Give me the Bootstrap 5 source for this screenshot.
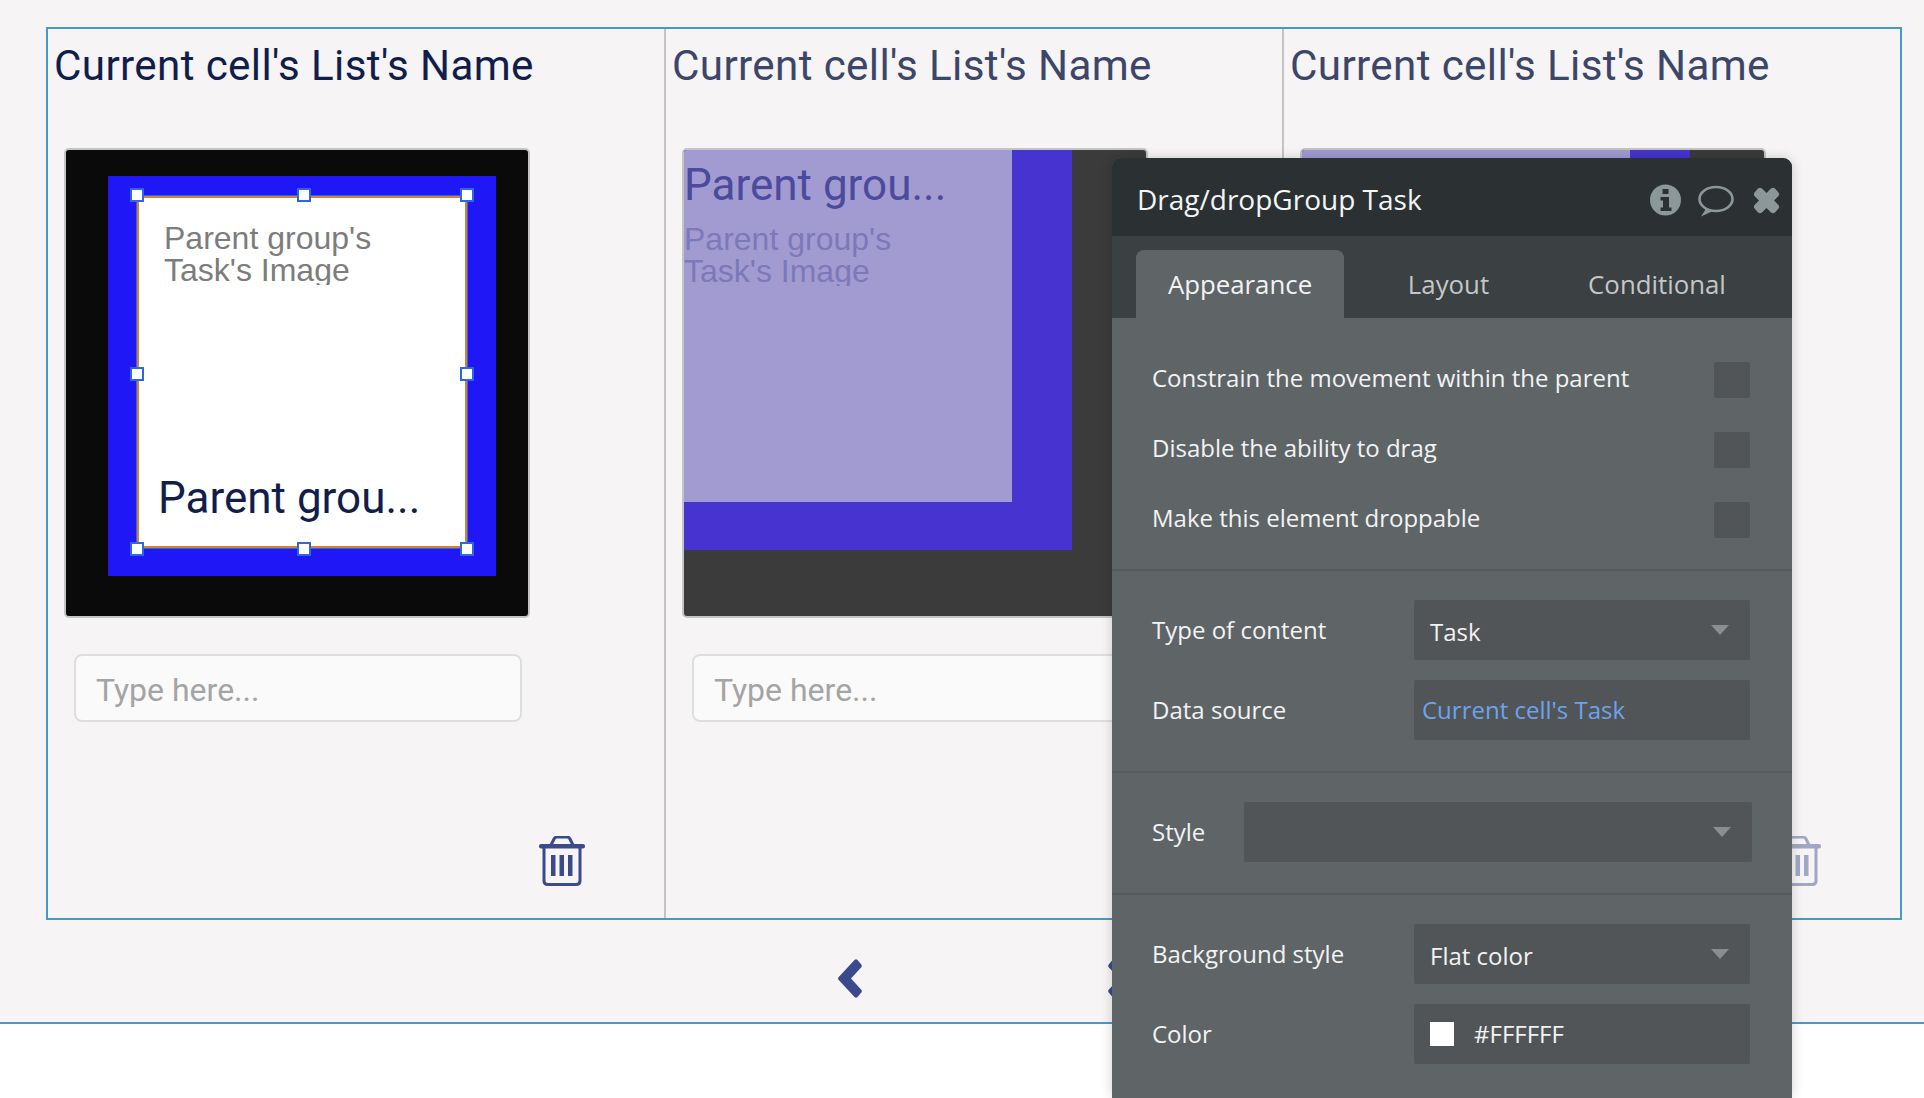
<!DOCTYPE html>
<html lang="en">
<head>
<meta charset="utf-8">
<title>Drag/drop editor</title>
<link href="https://cdn.jsdelivr.net/npm/bootstrap@5.3.0/dist/css/bootstrap.min.css" rel="stylesheet">
<style>
html,body{margin:0;height:1098px;overflow:hidden;background:#fff;}
.stage{width:1924px;height:1098px;overflow:hidden;font-family:"Roboto",sans-serif;}
.upper{height:1024px;background:#f6f4f5;border-bottom:2px solid #4799c9;padding-top:27px;}
.frame{margin-left:46px;width:1856px;height:893px;border:2px solid #4799c9;}
.cell{flex:none;width:618px;padding:0 0 0 16px;border-right:2px solid #c4c4c4;height:100%;}
.cell:first-child{width:618px;}
.cell:last-child{border-right:0;width:616px;}
.cell-title{margin:0 0 0 -10px;height:119px;padding-top:13px;font-size:42.2px;line-height:48px;font-weight:400;letter-spacing:.35px;color:#111d4a;white-space:nowrap;}
.dim .cell-title{color:#3c4669;}
.outer-box{width:466px;height:470px;border:2px solid #c4c4c4;border-radius:5px;background:#0a0a0a;overflow:hidden;}
.drop-pad{padding:26px 0 0 42px;}
.blue-box{width:388px;height:400px;background:#1f17f5;}
.drop-pad .blue-box{padding:20px 0 0 29px;}
.white-box{width:330px;height:352px;background:#fff;border:2px solid #d4802f;outline:1px solid #2e66e8;}
.image-txt{width:280px;height:63px;overflow:hidden;font-family:"Liberation Sans",sans-serif;font-size:32px;line-height:32px;color:#7c7c7c;}
.white-box .image-txt{margin:24px 0 0 25px;}
.white-box .name-txt{margin:auto 0 25px 19px;}
.name-txt{font-size:44px;line-height:46px;color:#111d4a;white-space:nowrap;}
.grip{position:absolute;width:14px;height:14px;background:#fff;border:2px solid #2e66e8;transform:translate(-50%,-50%);}
.g-l{left:-2px}.g-c{left:calc(50% + 2px)}.g-r{left:calc(100% + 2px)}
.g-t{top:-3px}.g-m{top:calc(50% + 2px)}.g-b{top:calc(100% + 3px)}
.ghost{background:#3b3b3b;}
.ghost .blue-box{background:#4733cf;}
.lav-box{width:328px;height:352px;background:#a29bd2;}
.ghost .name-txt{color:#4b4a9d;margin-top:0;height:73px;padding-top:12px;}
.ghost .image-txt{color:#7d78b7;}
.type-field{width:448px;height:68px;margin:36px 0 0 10px;border:2px solid #dedede;border-radius:8px;background:#fafafa;font-size:32px;line-height:68px;padding-left:20px;color:#a4a4a4;}
.bin-row{width:520px;margin-top:114px;padding-left:475px;}
.bin{display:block;width:46px;height:50px;fill:#3b4a8c;stroke:#3b4a8c;}
.faded{opacity:.45;}
.pager{margin-top:39px;margin-left:838px;gap:246px;}
.chev{display:block;width:24px;height:39px;fill:#3b4a8c;}
.panel{position:absolute;left:1112px;top:158px;width:680px;height:940px;background:#5f6467;border-radius:9px 9px 0 0;box-shadow:0 0 12px rgba(0,0,0,.18);font-family:"Open Sans",sans-serif;font-size:24px;color:#f2f3f3;}
.panel-head{height:78px;background:#2b3033;border-radius:9px 9px 0 0;padding:4px 6px 0 25px;font-size:28px;color:#f4f5f5;}
.tabs{height:82px;background:#3b4043;padding:14px 0 0 24px;font-size:25.8px;color:#c4c7c8;}
.tab{width:208px;height:68px;line-height:68px;text-align:center;}
.tab.on{background:#5f6467;border-radius:8px 8px 0 0;color:#f2f3f3;}
.tab-l{width:209px}.tab-r{width:208px}
.sect{padding:29px 42px 31px 40px;border-bottom:2px solid #565b5e;}
.sect-first{padding-top:44px;gap:34px;}
.sect-first .lbl{padding-bottom:4px;}
.sect-two{gap:20px;}
.tick{width:36px;height:36px;background:#515558;border-radius:2px;}
.fld{width:336px;height:60px;background:#515558;border-radius:2px;padding:0 21px 0 16px;}
.fld-wide{width:508px;margin-right:-2px;}
.src{padding-left:8px;color:#6ea3ea;}
.drop-val{padding-top:4px;}
.tri{width:0;height:0;border-left:9px solid transparent;border-right:9px solid transparent;border-top:10px solid #8a8e90;margin-left:auto;}
.swatch{width:24px;height:24px;background:#fff;margin-right:20px;}
.icon-btn{display:block;fill:#8c9799;margin-top:2px;}
.lbl{line-height:1;}
</style>
</head>
<body>
<div class="stage position-relative">
  <div class="upper">
    <div class="frame d-flex">
      <div class="cell">
        <h2 class="cell-title">Current cell's List's Name</h2>
        <div class="outer-box drop-pad">
          <div class="blue-box">
            <div class="white-box position-relative d-flex flex-column">
              <div class="image-txt">Parent group's<br>Task's Image</div>
              <div class="name-txt">Parent grou...</div>
              <i class="grip g-l g-t"></i><i class="grip g-c g-t"></i><i class="grip g-r g-t"></i>
              <i class="grip g-l g-m"></i><i class="grip g-r g-m"></i>
              <i class="grip g-l g-b"></i><i class="grip g-c g-b"></i><i class="grip g-r g-b"></i>
            </div>
          </div>
        </div>
        <div class="type-field">Type here...</div>
        <div class="bin-row">
          <svg class="bin" viewBox="0 0 46 50"><rect x="0" y="8" width="46" height="4.5" rx="2" stroke="none"/><path d="M12 9 15 3Q16 1 18 1H28Q30 1 31 3L34 9" fill="none" stroke-width="3"/><path d="M5 12V45Q5 48.500 9 48.500H37Q41 48.500 41 45V12" fill="none" stroke-width="3"/><rect x="12" y="19" width="4.500" height="21" stroke="none"/><rect x="20.500" y="19" width="4.500" height="21" stroke="none"/><rect x="29" y="19" width="4.500" height="21" stroke="none"/></svg>
        </div>
      </div>
      <div class="cell dim">
        <h2 class="cell-title">Current cell's List's Name</h2>
        <div class="outer-box ghost">
          <div class="blue-box"><div class="lav-box">
            <div class="name-txt">Parent grou...</div>
            <div class="image-txt">Parent group's<br>Task's Image</div>
          </div></div>
        </div>
        <div class="type-field">Type here...</div>
      </div>
      <div class="cell dim">
        <h2 class="cell-title">Current cell's List's Name</h2>
        <div class="outer-box ghost">
          <div class="blue-box"><div class="lav-box">
            <div class="name-txt">Parent grou...</div>
            <div class="image-txt">Parent group's<br>Task's Image</div>
          </div></div>
        </div>
        <div class="type-field">Type here...</div>
        <div class="bin-row">
          <svg class="bin faded" viewBox="0 0 46 50"><rect x="0" y="8" width="46" height="4.5" rx="2" stroke="none"/><path d="M12 9 15 3Q16 1 18 1H28Q30 1 31 3L34 9" fill="none" stroke-width="3"/><path d="M5 12V45Q5 48.500 9 48.500H37Q41 48.500 41 45V12" fill="none" stroke-width="3"/><rect x="12" y="19" width="4.500" height="21" stroke="none"/><rect x="20.500" y="19" width="4.500" height="21" stroke="none"/><rect x="29" y="19" width="4.500" height="21" stroke="none"/></svg>
        </div>
      </div>
    </div>
    <div class="pager d-flex">
      <svg class="chev" viewBox="0 0 24 39"><path d="M0.500 18.200 16.500 1Q18 -.3 19.500 1L23.300 5.500Q24.300 7 23.300 8.200L13 19.500 23.300 30.800Q24.300 32 23.300 33.500L19.500 38Q18 39.300 16.500 38L.5 20.800Q-.3 19.500 .5 18.200Z"/></svg>
      <svg class="chev" viewBox="0 0 24 39"><path d="M23.500 18.200 7.500 1Q6 -.3 4.500 1L.7 5.500Q-.3 7 .7 8.200L11 19.500 .7 30.800Q-.3 32 .7 33.500L4.500 38Q6 39.300 7.500 38L23.500 20.800Q24.300 19.500 23.500 18.200Z"/></svg>
    </div>
  </div>

  <div class="panel">
    <div class="panel-head d-flex align-items-center">
      <span>Drag/dropGroup Task</span>
      <svg class="icon-btn ms-auto" width="136" height="40" viewBox="0 0 136 40">
        <path fill-rule="evenodd" d="M15.500 4.500a15.500 15.500 0 1 0 0 31 15.500 15.500 0 0 0 0-31ZM12.500 9h6v5h-6ZM10.500 17h8.500v10.500h2.500v3.500h-11v-3.500h2.500v-7h-2.500Z"/>
        <ellipse cx="66" cy="19" rx="16.500" ry="12" fill="none" stroke="#8c9799" stroke-width="2.600"/>
        <path d="M56.500 28 51 36.500 63 31Z"/>
        <path d="M104.500 12.500 108 8.500Q110 7 112 8.500L116.500 13 121 8.500Q123 7 125 8.500L128.500 12.500Q130 14.500 128.500 16L124 20.500 128.500 25Q130 27 128.500 28.500L125 32.500Q123 34 121 32.500L116.500 28 112 32.500Q110 34 108 32.500L104.500 28.500Q103 27 104.500 25L109 20.500 104.500 16Q103 14.500 104.500 12.500Z"/>
      </svg>
    </div>
    <div class="tabs d-flex">
      <div class="tab on">Appearance</div>
      <div class="tab tab-l">Layout</div>
      <div class="tab tab-r">Conditional</div>
    </div>
    <div class="sect sect-first d-flex flex-column">
      <div class="d-flex justify-content-between align-items-center"><span class="lbl">Constrain the movement within the parent</span><div class="tick"></div></div>
      <div class="d-flex justify-content-between align-items-center"><span class="lbl">Disable the ability to drag</span><div class="tick"></div></div>
      <div class="d-flex justify-content-between align-items-center"><span class="lbl">Make this element droppable</span><div class="tick"></div></div>
    </div>
    <div class="sect sect-two d-flex flex-column">
      <div class="d-flex justify-content-between align-items-center"><span class="lbl">Type of content</span><div class="fld d-flex align-items-center"><span class="drop-val">Task</span><i class="tri"></i></div></div>
      <div class="d-flex justify-content-between align-items-center"><span class="lbl">Data source</span><div class="fld src d-flex align-items-center"><span>Current cell's Task</span></div></div>
    </div>
    <div class="sect d-flex flex-column">
      <div class="d-flex justify-content-between align-items-center"><span class="lbl">Style</span><div class="fld fld-wide d-flex align-items-center"><i class="tri"></i></div></div>
    </div>
    <div class="sect sect-two d-flex flex-column border-0">
      <div class="d-flex justify-content-between align-items-center"><span class="lbl">Background style</span><div class="fld d-flex align-items-center"><span class="drop-val">Flat color</span><i class="tri"></i></div></div>
      <div class="d-flex justify-content-between align-items-center"><span class="lbl">Color</span><div class="fld d-flex align-items-center"><i class="swatch"></i><span>#FFFFFF</span></div></div>
    </div>
  </div>
</div>
<script src="https://cdn.jsdelivr.net/npm/bootstrap@5.3.0/dist/js/bootstrap.bundle.min.js"></script>
</body>
</html>
